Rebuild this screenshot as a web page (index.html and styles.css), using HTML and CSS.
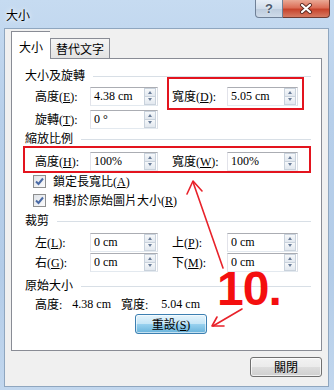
FILE: index.html
```html
<!DOCTYPE html>
<html lang="zh-Hant">
<head>
  <meta charset="UTF-8">
  <title>大小</title>
  <link rel="stylesheet" href="styles.css">
</head>
<body>
  <div class="window">
    <div class="titlebar">
      <span class="title">大小</span>
      <div class="caption-btns">
        <span class="btn-help">?</span>
        <span class="btn-close">
          <svg width="14" height="11" viewBox="0 0 14 11">
            <path d="M3 2 L11 9 M11 2 L3 9" stroke="#5b2a22" stroke-width="4" stroke-linecap="round"/>
            <path d="M3 2 L11 9 M11 2 L3 9" stroke="#fff" stroke-width="2.2" stroke-linecap="round"/>
          </svg>
        </span>
      </div>
    </div>

    <div class="client">
      <div class="tabs">
        <div class="tab active">大小</div>
        <div class="tab">替代文字</div>
      </div>

      <div class="panel">
        <div class="group">大小及旋轉</div>
        <div class="row r1">
          <label>高度(<u>E</u>):</label>
          <div class="spin"><span class="val">4.38 cm</span><span class="arrows"><i class="up"></i><i class="dn"></i></span></div>
          <label>寬度(<u>D</u>):</label>
          <div class="spin wide"><span class="val">5.05 cm</span><span class="arrows"><i class="up"></i><i class="dn"></i></span></div>
        </div>
        <div class="row r2">
          <label>旋轉(<u>T</u>):</label>
          <div class="spin"><span class="val">0 °</span><span class="arrows"><i class="up"></i><i class="dn"></i></span></div>
        </div>

        <div class="group g2">縮放比例</div>
        <div class="row r3">
          <label>高度(<u>H</u>):</label>
          <div class="spin"><span class="val">100%</span><span class="arrows"><i class="up"></i><i class="dn"></i></span></div>
          <label>寬度(<u>W</u>):</label>
          <div class="spin wide"><span class="val">100%</span><span class="arrows"><i class="up"></i><i class="dn"></i></span></div>
        </div>
        <div class="check">
          <span class="box"><svg width="11" height="11" viewBox="0 0 11 11"><path d="M2 5.5 L4.5 8 L9 2.5" fill="none" stroke="#4a6aa5" stroke-width="2"/></svg></span>
          <span>鎖定長寬比(<u>A</u>)</span>
        </div>
        <div class="check">
          <span class="box"><svg width="11" height="11" viewBox="0 0 11 11"><path d="M2 5.5 L4.5 8 L9 2.5" fill="none" stroke="#4a6aa5" stroke-width="2"/></svg></span>
          <span>相對於原始圖片大小(<u>R</u>)</span>
        </div>

        <div class="group g3">裁剪</div>
        <div class="row r4">
          <label>左(<u>L</u>):</label>
          <div class="spin"><span class="val">0 cm</span><span class="arrows"><i class="up"></i><i class="dn"></i></span></div>
          <label>上(<u>P</u>):</label>
          <div class="spin wide"><span class="val">0 cm</span><span class="arrows"><i class="up"></i><i class="dn"></i></span></div>
        </div>
        <div class="row r5">
          <label>右(<u>G</u>):</label>
          <div class="spin"><span class="val">0 cm</span><span class="arrows"><i class="up"></i><i class="dn"></i></span></div>
          <label>下(<u>M</u>):</label>
          <div class="spin wide"><span class="val">0 cm</span><span class="arrows"><i class="up"></i><i class="dn"></i></span></div>
        </div>

        <div class="group g4">原始大小</div>
        <div class="orig">
          <span>高度:</span><span class="num">4.38 cm</span>
          <span class="k2">寬度:</span><span class="num">5.04 cm</span>
        </div>
        <button class="reset">重設(<u>S</u>)</button>
      </div>

      <div class="footer">
        <button class="close-btn">關閉</button>
      </div>
    </div>

    <!-- annotations drawn over the dialog -->
    <div class="mark mark-width"></div>
    <div class="mark mark-scale"></div>
    <div class="step">10.</div>
    <svg class="arrows-layer" width="334" height="390" viewBox="0 0 334 390">
      <g fill="none" stroke="#e8222a" stroke-width="1.6" stroke-linecap="round" stroke-linejoin="round">
        <path d="M223 268 L193 182"/>
        <path d="M187 194 L193 181 L202 191"/>
        <path d="M242 309 L213 326"/>
        <path d="M217 317 L212 326 L224 326"/>
      </g>
    </svg>
  </div>
</body>
</html>
```

FILE: styles.css
```css
* {
  box-sizing: border-box;
}
body {
  margin: 0;
  background: #bcd3ec;
  font-family: "Liberation Serif", "Noto Sans CJK TC", serif;
  font-size: 12px;
  color: #000;
}
.window {
  position: relative;
  width: 334px;
  height: 390px;
  overflow: hidden;
  background: linear-gradient(#c6dbf1, #b7cfea 30%, #b3cce8 70%, #c2d7ee);
}
.titlebar {
  height: 28px;
  display: flex;
  justify-content: space-between;
  align-items: flex-start;
  padding-left: 6px;
}
.title {
  font-family: "Noto Sans CJK TC", sans-serif;
  font-size: 12px;
  line-height: 16px;
  margin-top: 7px;
  text-shadow: 0 0 6px #fff, 0 0 3px #fff;
}
.caption-btns {
  display: flex;
  margin-right: 4px;
}
.btn-help {
  width: 28px;
  height: 18px;
  border: 1px solid #6f8097;
  border-top: none;
  border-radius: 0 0 0 4px;
  background: linear-gradient(#e7eef6, #d0dcea 50%, #bccbdd 51%, #cfdbe9);
  font-family: "Liberation Sans", sans-serif;
  font-weight: bold;
  font-size: 13px;
  line-height: 17px;
  text-align: center;
  color: #4c5a6c;
  text-shadow: 0 0 2px #fff;
}
.btn-close {
  width: 47px;
  height: 18px;
  display: flex;
  align-items: center;
  justify-content: center;
  border: 1px solid #6e3a31;
  border-top: none;
  border-left: none;
  border-radius: 0 0 4px 0;
  background: linear-gradient(#eaa995, #dc6e57 45%, #c7442c 55%, #d67a62);
}

.client {
  margin: 0 5px 0 4px;
  height: 359px;
  background: #f0f0f0;
  border: 1px solid #8fa6bf;
  padding: 1px 6px 0 6px;
}
.tabs {
  display: flex;
  align-items: flex-end;
  height: 28px;
  position: relative;
  z-index: 1;
}
.tab {
  height: 20px;
  padding: 0 7px;
  border: 1px solid #898c95;
  border-bottom: none;
  background: linear-gradient(#f5f5f5, #e3e3e3);
  font-family: "Noto Sans CJK TC", sans-serif;
  font-size: 12px;
  line-height: 19px;
  margin-bottom: 0;
}
.tab.active {
  height: 28px;
  width: 39px;
  padding: 0;
  text-align: center;
  line-height: 29px;
  background: #fff;
  margin-bottom: -1px;
  border-right: none;
}
.tab + .tab {
  width: 60px;
  padding: 0;
  text-align: center;
}

.panel {
  height: 293px;
  background: #fff;
  border: 1px solid #898c95;
  padding: 9px 10px 0 13px;
}
.group {
  display: flex;
  align-items: center;
  height: 16px;
  line-height: 16px;
}
.group::after {
  content: "";
  flex: 1;
  height: 1px;
  margin-left: 8px;
  background: #d8dfe6;
}
.g2 { margin-top: 2px; }
.g3 { margin-top: 4px; }
.g4 { margin-top: 6px; }

.row {
  display: flex;
  align-items: center;
  height: 20px;
  padding-left: 10px;
}
.r1 { margin-top: 2px; }
.r2 { margin-top: 3px; }
.r3 { margin-top: 4px; }
.r4 { margin-top: 3px; }
.row label {
  width: 55px;
  white-space: nowrap;
}
.row .spin + label {
  margin-left: 14px;
}
.spin {
  display: flex;
  align-items: center;
  justify-content: space-between;
  width: 68px;
  height: 19px;
  border: 1px solid;
  border-color: #abadb3 #dbdfe6 #e3e9ef #e2e3ea;
  background: #fff;
  padding: 0 1px 0 3px;
}
.spin.wide {
  width: 71px;
}
.val {
  line-height: 17px;
  white-space: nowrap;
}
.arrows {
  display: flex;
  flex-direction: column;
  width: 12px;
  height: 17px;
}
.arrows i {
  flex: 1;
  position: relative;
  border: 1px solid #c9d2dc;
  background: linear-gradient(#f6f8fa, #e2e8ef);
}
.arrows i + i {
  border-top: none;
}
.arrows i::after {
  content: "";
  position: absolute;
  left: 3px;
  top: 2px;
  border-left: 2.5px solid transparent;
  border-right: 2.5px solid transparent;
}
.arrows .up::after {
  border-bottom: 3px solid #6a7d99;
}
.arrows .dn::after {
  top: 1px;
  border-top: 3px solid #6a7d99;
}

.check {
  display: flex;
  align-items: center;
  height: 18px;
  margin-top: 1px;
  padding-left: 8px;
  gap: 7px;
}
.check .box {
  width: 13px;
  height: 13px;
  border: 1px solid #8e8f8f;
  background: linear-gradient(135deg, #dfe3e8, #fbfbfc);
  display: flex;
  align-items: center;
  justify-content: center;
}

.orig {
  display: flex;
  align-items: center;
  height: 16px;
  margin-top: 2px;
  padding-left: 10px;
  white-space: nowrap;
}
.orig .num {
  margin-left: 10px;
}
.orig .k2 {
  margin-left: 10px;
}
.orig .num:last-child {
  margin-left: 13px;
}

button {
  font-family: "Liberation Serif", "Noto Sans CJK TC", serif;
  font-size: 12px;
  color: #000;
  padding: 0;
  cursor: pointer;
}
.reset {
  display: block;
  width: 72px;
  height: 20px;
  margin: 2px 0 0 110px;
  border: 1px solid #3c7fb1;
  border-radius: 3px;
  background: linear-gradient(#e5f4fc, #c4e5f6 50%, #98d1ef 51%, #68b3db);
  box-shadow: inset 0 0 0 1px rgba(255, 255, 255, 0.6);
}
.footer {
  display: flex;
  justify-content: flex-end;
  margin-top: 6px;
}
.close-btn {
  width: 72px;
  height: 20px;
  border: 1px solid #707070;
  border-radius: 3px;
  background: linear-gradient(#f2f2f2, #ebebeb 50%, #dddddd 51%, #cfcfcf);
  box-shadow: inset 0 0 0 1px rgba(255, 255, 255, 0.7);
}

.mark {
  position: absolute;
  border: 2px solid #e3141e;
}
.mark-width {
  left: 167px;
  top: 77px;
  width: 137px;
  height: 33px;
}
.mark-scale {
  left: 23px;
  top: 146px;
  width: 288px;
  height: 27px;
}
.step {
  position: absolute;
  left: 217px;
  top: 271px;
  font-family: "Liberation Sans", sans-serif;
  font-weight: bold;
  font-size: 48px;
  line-height: 36px;
  letter-spacing: -1px;
  color: #f40f0f;
}
.arrows-layer {
  position: absolute;
  left: 0;
  top: 0;
  pointer-events: none;
}
```
